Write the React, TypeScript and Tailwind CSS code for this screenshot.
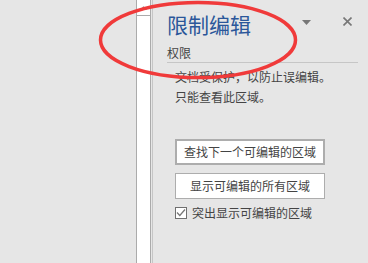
export default function App() {
  return (
    <div className="relative flex h-[263px] w-[368px] overflow-hidden bg-[#e6e6e6] font-['Noto_Sans_CJK_SC',sans-serif] text-[#444]">
      <div className="w-[136px] shrink-0" />
      {/* scrollbar */}
      <div className="flex w-[15px] shrink-0 flex-col border-x border-[#ababab] bg-white">
        <div className="flex h-[16px] items-center justify-center border-b border-[#ababab]">
          <svg width="7" height="4" viewBox="0 0 7 4">
            <path d="M0 4 L3.5 0 L7 4 Z" fill="#a6a6a6" />
          </svg>
        </div>
      </div>
      <div className="ml-px w-px shrink-0 bg-[#c6c6c6]" />

      {/* task pane */}
      <div className="flex flex-1 flex-col pl-[14px] pr-[10px] pt-[9px]">
        <div className="flex items-start">
          <h1 className="flex-1 text-[21px] leading-[30px] text-[#2b579a]">限制编辑</h1>
          <svg className="mt-[11px]" width="9" height="5" viewBox="0 0 9 5">
            <path d="M0 0 L9 0 L4.5 5 Z" fill="#777" />
          </svg>
          <svg className="ml-[32px] mr-[6px] mt-[8px]" width="9" height="9" viewBox="0 0 9 9">
            <path d="M0.5 0.5 L8.5 8.5 M8.5 0.5 L0.5 8.5" stroke="#777" strokeWidth="1.6" />
          </svg>
        </div>
        <div className="mt-[6px] border-b border-[#c6c6c6] pb-px text-[12px] leading-[16px]">权限</div>

        <div className="mt-[4px] pl-[8px] text-[12px] leading-[20px]">
          <p>文档受保护，以防止误编辑。</p>
          <p>只能查看此区域。</p>

          <button className="mt-[32px] flex h-[26px] w-[150px] items-center justify-center border-2 border-[#adadad] bg-white text-[12px] leading-[16px] text-[#444]">
            查找下一个可编辑的区域
          </button>
          <button className="mt-[8px] flex h-[26px] w-[150px] items-center justify-center border border-[#adadad] bg-white text-[12px] leading-[16px] text-[#444]">
            显示可编辑的所有区域
          </button>

          <label className="mt-[8px] flex items-center gap-[5px] leading-[12px]">
            <span className="flex h-[12px] w-[12px] items-center justify-center border border-[#707070] bg-white">
              <svg width="10" height="10" viewBox="0 0 10 10">
                <path d="M1 4.5 L3.8 7.5 L9 1.5" fill="none" stroke="#777" strokeWidth="1.3" />
              </svg>
            </span>
            <span className="text-[12px]">突出显示可编辑的区域</span>
          </label>
        </div>
      </div>

      {/* red annotation */}
      <svg className="pointer-events-none absolute left-0 top-0" width="368" height="263">
        <ellipse cx="198" cy="40" rx="97.5" ry="37.5" fill="none" stroke="#f03a3a" strokeWidth="3.5" />
      </svg>
    </div>
  );
}
